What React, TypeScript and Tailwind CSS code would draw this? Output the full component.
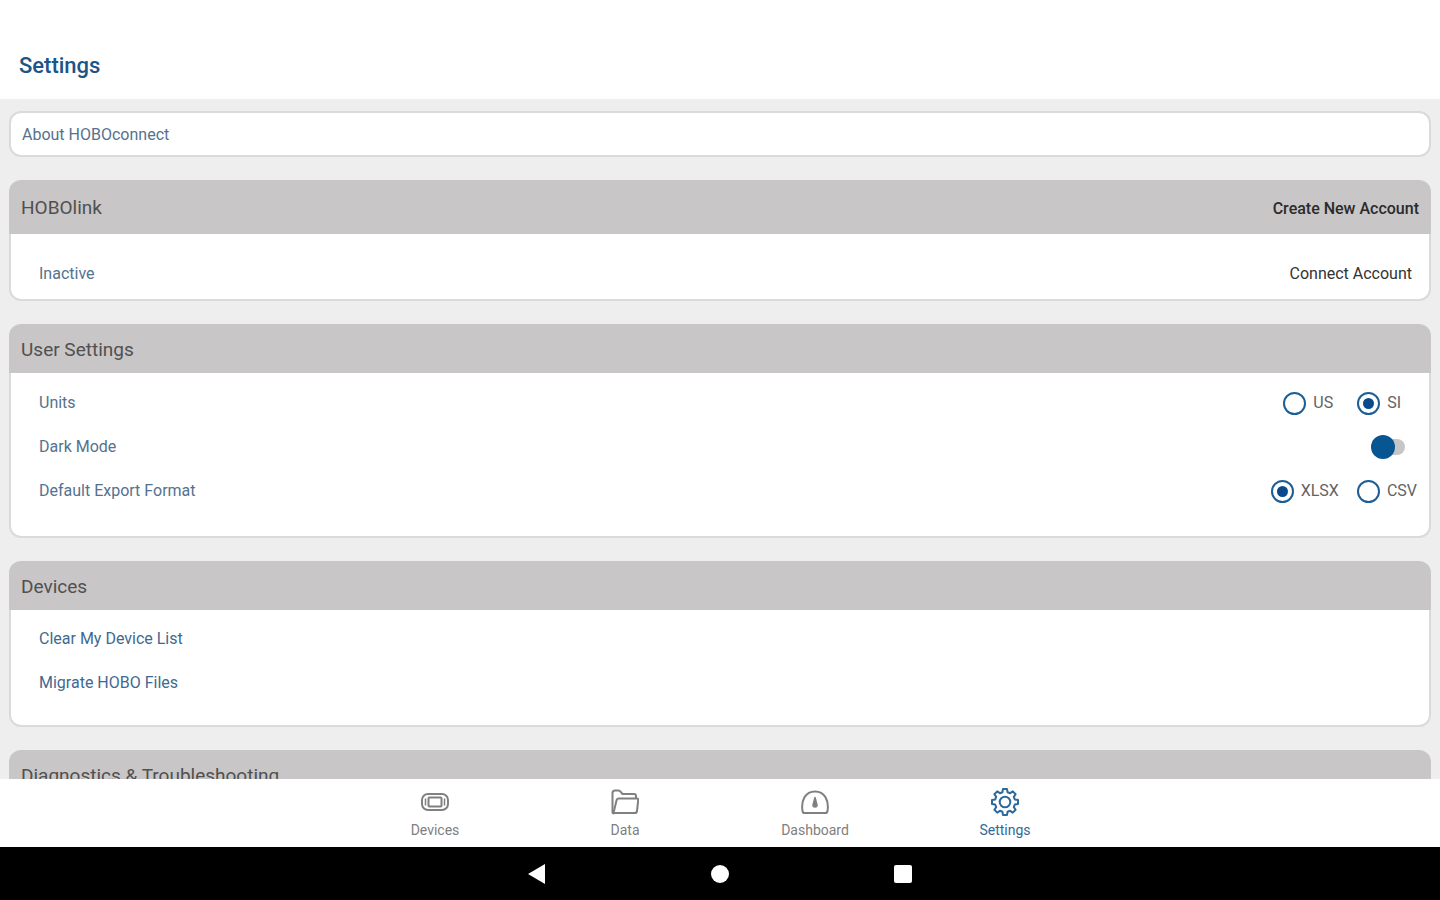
import { useState, type ReactNode } from "react";

function DevicesIcon() {
  return (
    <svg viewBox="0 0 28 28" className="size-7" fill="none" stroke="currentColor" strokeWidth="2" strokeLinejoin="round">
      <rect x="1" y="6" width="26" height="16" rx="6" />
      <rect x="7.5" y="9.5" width="13" height="9" rx="1" />
      <path d="M4.5 10.5v7M23.5 10.5v7" strokeWidth="1.5" />
    </svg>
  );
}

function DataIcon() {
  return (
    <svg viewBox="0 0 28 28" className="size-7" fill="none" stroke="currentColor" strokeWidth="2" strokeLinejoin="round">
      <path d="M1.500 24V5c0-1.500 1-2.500 2.500-2.500h3.500c1 0 1.500.4 2 1.200L11.500 6H23c1.200 0 2 .8 2 2v2.500" />
      <path d="M1.500 24c0 1 .6 1.500 1.500 1.500M2.500 25 5.500 12.500c.3-1.300 1-2 2.300-2H26c1 0 1.300.6 1.200 1.500L26 23c-.2 1.500-1 2-2.200 2z" />
    </svg>
  );
}

function DashboardIcon() {
  return (
    <svg viewBox="0 0 28 28" className="size-7" fill="none" stroke="currentColor" strokeWidth="2" strokeLinejoin="round">
      <path d="M3.500 25c-1.200 0-1.800-.8-2-2C-.2 12 4.500 3.500 14 3.500S28.200 12 26.500 23c-.2 1.200-.8 2-2 2z" />
      <path d="M14 9.500l2 7.500a2 2 0 1 1-4 0z" fill="currentColor" strokeWidth="1.500" />
    </svg>
  );
}

function SettingsIcon() {
  return (
    <svg viewBox="-14 -14 28 28" className="size-7" fill="none" stroke="currentColor" strokeWidth="2" strokeLinejoin="round">
      <path d="M-2.600-9.800-2-13H2l.6 3.200 2.500 1L7.800-10.600 10.600-7.800 8.800-5.100l1 2.500L13-2V2l-3.200.6-1 2.500L10.600 7.800 7.800 10.600 5.100 8.800l-2.500 1L2 13H-2l-.6-3.200-2.500-1L-7.800 10.600-10.600 7.800-8.800 5.100l-1-2.500L-13 2V-2l3.200-.6 1-2.500L-10.600-7.800-7.800-10.600-5.100-8.800z" />
      <circle r="5.300" />
    </svg>
  );
}

const tabs = [
  { label: "Devices", icon: DevicesIcon },
  { label: "Data", icon: DataIcon },
  { label: "Dashboard", icon: DashboardIcon },
  { label: "Settings", icon: SettingsIcon },
];

function Card({ title, action, children }: { title: string; action?: ReactNode; children?: ReactNode }) {
  return (
    <section className="shrink-0">
      <div
        className={`flex items-center justify-between rounded-t-xl bg-[#c8c6c7] px-3 pt-[3px] ${
          action ? "h-[54px]" : "h-[49px]"
        }`}
      >
        <h2 className="text-[19px] text-[#505050]">{title}</h2>
        {action}
      </div>
      <div className="rounded-b-xl border-2 border-t-0 border-[#dadada] bg-white">{children}</div>
    </section>
  );
}

function Radio({
  name,
  label,
  checked,
  onChange,
}: {
  name: string;
  label: string;
  checked: boolean;
  onChange: () => void;
}) {
  return (
    <label className="flex items-center gap-[7px] text-base text-[#636363]">
      <input
        type="radio"
        name={name}
        checked={checked}
        onChange={onChange}
        className="grid size-[23px] appearance-none place-content-center rounded-full border-2 border-[#1d5f94] before:size-[11px] before:rounded-full checked:before:bg-[#0a4a8c]"
      />
      {label}
    </label>
  );
}

export default function App() {
  const [units, setUnits] = useState("SI");
  const [format, setFormat] = useState("XLSX");
  const [darkMode, setDarkMode] = useState(false);
  const [tab, setTab] = useState("Settings");

  return (
    <div className="flex h-screen flex-col bg-white font-['Roboto',sans-serif]">
      <header className="px-[19px] pt-[50px] pb-[17px]">
        <h1 className="text-[22px] leading-8 font-medium text-[#1c5587]">Settings</h1>
      </header>

      <main className="flex min-h-0 flex-1 flex-col gap-[23px] overflow-y-auto bg-[#eeeeee] px-[9px] pt-3 [scrollbar-width:none]">
        <button className="h-[46px] shrink-0 rounded-xl border-2 border-[#dadada] bg-white px-[11px] pt-0.5 text-left text-base text-[#54728e]">
          About HOBOconnect
        </button>

        <Card title="HOBOlink" action={<button className="text-base font-medium text-[#2b2b2b]">Create New Account</button>}>
          <div className="flex h-[65px] items-end justify-between pr-[17px] pb-[13px] pl-7 text-base">
            <span className="text-[#54728e]">Inactive</span>
            <button className="text-[#333333]">Connect Account</button>
          </div>
        </Card>

        <Card title="User Settings">
          <div className="pt-2 pb-[23px] pl-7 text-base text-[#54728e]">
            <div role="radiogroup" aria-label="Units" className="flex h-11 items-center justify-between pr-7">
              <span>Units</span>
              <div className="flex gap-6">
                <Radio name="units" label="US" checked={units === "US"} onChange={() => setUnits("US")} />
                <Radio name="units" label="SI" checked={units === "SI"} onChange={() => setUnits("SI")} />
              </div>
            </div>
            <div className="flex h-11 items-center justify-between pr-6">
              <label htmlFor="dark-mode">Dark Mode</label>
              <input
                id="dark-mode"
                type="checkbox"
                role="switch"
                checked={darkMode}
                onChange={(e) => setDarkMode(e.target.checked)}
                className="relative h-4 w-8 appearance-none rounded-full bg-[#c6c6c6] before:absolute before:-top-1 before:-left-0.5 before:size-6 before:rounded-full before:bg-[#075591] checked:before:left-3"
              />
            </div>
            <div role="radiogroup" aria-label="Default Export Format" className="flex h-11 items-center justify-between pr-3">
              <span>Default Export Format</span>
              <div className="flex gap-[18px]">
                <Radio name="format" label="XLSX" checked={format === "XLSX"} onChange={() => setFormat("XLSX")} />
                <Radio name="format" label="CSV" checked={format === "CSV"} onChange={() => setFormat("CSV")} />
              </div>
            </div>
          </div>
        </Card>

        <Card title="Devices">
          <div className="flex flex-col items-start pt-[7px] pb-5 pl-7 text-base text-[#3f6a90]">
            <button className="h-11">Clear My Device List</button>
            <button className="h-11">Migrate HOBO Files</button>
          </div>
        </Card>

        <Card title="Diagnostics & Troubleshooting" />
      </main>

      <nav className="flex h-[68px] shrink-0 justify-center">
        {tabs.map(({ label, icon: Icon }) => (
          <button
            key={label}
            onClick={() => setTab(label)}
            className={`flex w-[190px] flex-col items-center pt-[9px] text-sm ${
              tab === label ? "text-[#2d6a9c]" : "text-[#808080]"
            }`}
          >
            <Icon />
            <span className="pt-1">{label}</span>
          </button>
        ))}
      </nav>

      <div className="flex h-[53px] shrink-0 items-center justify-center bg-black text-white">
        <button aria-label="Back" className="flex w-[183px] justify-center">
          <svg viewBox="0 0 18 20" className="h-5 w-[18px]" fill="currentColor">
            <path d="M0 10 17 0v20z" />
          </svg>
        </button>
        <button aria-label="Home" className="flex w-[183px] justify-center">
          <span className="size-[18px] rounded-full bg-white" />
        </button>
        <button aria-label="Overview" className="flex w-[183px] justify-center">
          <span className="size-[18px] rounded-xs bg-white" />
        </button>
      </div>
    </div>
  );
}
